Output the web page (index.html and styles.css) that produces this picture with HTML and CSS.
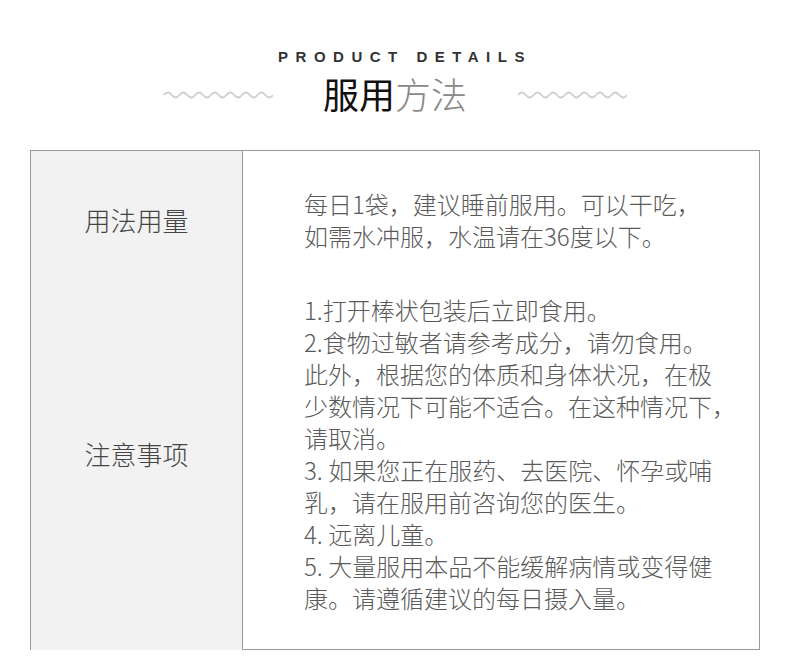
FILE: index.html
```html
<!DOCTYPE html>
<html lang="zh-CN">

<head>
    <meta charset="UTF-8">
    <meta name="viewport" content="width=device-width, initial-scale=1.0">
    <title>服用方法</title>
    <link rel="stylesheet" href="styles.css">
</head>

<body>
    <!-- Title -->
    <div class="heading">
        <p class="heading-en">PRODUCT DETAILS</p>
        <div class="heading-row">
            <svg class="wave" width="110" height="8" viewBox="0 0 110 8">
                <path d="M1 4 q3.9 -5 7.8 0 t7.8 0 t7.8 0 t7.8 0 t7.8 0 t7.8 0 t7.8 0 t7.8 0 t7.8 0 t7.8 0 t7.8 0 t7.8 0 t7.8 0 t7.8 0" />
            </svg>
            <h1 class="heading-cn">服用<span class="light">方法</span></h1>
            <svg class="wave" width="110" height="8" viewBox="0 0 110 8">
                <path d="M1 4 q3.9 -5 7.8 0 t7.8 0 t7.8 0 t7.8 0 t7.8 0 t7.8 0 t7.8 0 t7.8 0 t7.8 0 t7.8 0 t7.8 0 t7.8 0 t7.8 0 t7.8 0" />
            </svg>
        </div>
    </div>

    <!-- Table -->
    <div class="details">
        <div class="label first">用法用量</div>
        <div class="value first">
            每日1袋，建议睡前服用。可以干吃，<br>
            如需水冲服，水温请在36度以下。
        </div>

        <div class="label last">注意事项</div>
        <div class="value last">
            1.打开棒状包装后立即食用。<br>
            2.食物过敏者请参考成分，请勿食用。<br>
            此外，根据您的体质和身体状况，在极<br>
            少数情况下可能不适合。在这种情况下，<br>
            请取消。<br>
            3. 如果您正在服药、去医院、怀孕或哺<br>
            乳，请在服用前咨询您的医生。<br>
            4. 远离儿童。<br>
            5. 大量服用本品不能缓解病情或变得健<br>
            康。请遵循建议的每日摄入量。
        </div>
    </div>
</body>

</html>
```

FILE: styles.css
```css
body {
    margin: 0;
    padding: 0;
    background: #fff;
    font-family: "Noto Sans CJK SC", "Noto Sans", sans-serif;
    color: #555;
}

.heading {
    padding-top: 47px;
    text-align: center;
}

.heading-en {
    margin: 0;
    font-family: "Liberation Sans", Arial, sans-serif;
    font-weight: bold;
    font-size: 15px;
    line-height: 20px;
    letter-spacing: 7.5px;
    padding-left: 20px;
    color: #333;
}

.heading-row {
    display: flex;
    justify-content: center;
    align-items: center;
    gap: 50px;
    margin-top: 4px;
}

.wave {
    display: block;
    margin-top: 4px;
}

.wave path {
    fill: none;
    stroke: #cfcfcf;
    stroke-width: 1.8;
}

.heading-cn {
    margin: 0;
    font-size: 36px;
    font-weight: normal;
    line-height: 44px;
    color: #111;
}

.heading-cn .light {
    color: #888;
    font-weight: 300;
}

.details {
    display: grid;
    grid-template-columns: 212px 1fr;
    grid-template-rows: auto 1fr;
    margin: 35px 30px 0;
    border: 1px solid #9a9a9a;
    width: 728px;
    height: 498px;
}

.label {
    background: #f2f2f2;
    border-right: 1px solid #9a9a9a;
    display: flex;
    align-items: center;
    justify-content: center;
    font-size: 26px;
    font-weight: 300;
    color: #444;
    line-height: 32px;
}

.value {
    padding-left: 61px;
    font-size: 24px;
    font-weight: 300;
    line-height: 32px;
    color: #5a5a5a;
}

.first {
    padding-top: 37px;
    padding-bottom: 23px;
}

.last {
    padding-top: 19px;
    padding-bottom: 37px;
}
```
